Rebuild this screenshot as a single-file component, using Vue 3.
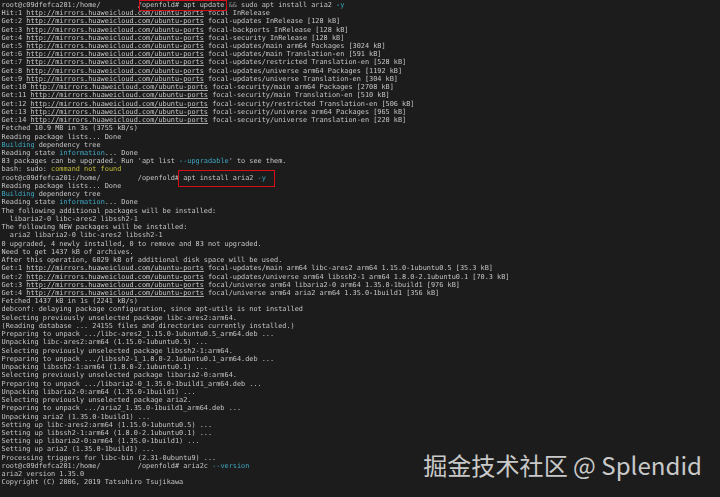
<script setup>
const mirror = 'http://mirrors.huaweicloud.com/ubuntu-ports'
const pad = '         '
const get = (label, rest) => [[label + ' '], [mirror, 'link'], [' ' + rest]]
const prompt = '/openfold#'

const lines = [
  [['root@c09dfefca201:/home/' + pad + prompt + ' apt update '], ['&&', 'dim'], [' sudo apt install aria2 '], ['-y', 'cyan']],
  get('Hit:1', 'focal InRelease'),
  get('Get:2', 'focal-updates InRelease [128 kB]'),
  get('Get:3', 'focal-backports InRelease [128 kB]'),
  get('Get:4', 'focal-security InRelease [128 kB]'),
  get('Get:5', 'focal-updates/main arm64 Packages [3024 kB]'),
  get('Get:6', 'focal-updates/main Translation-en [591 kB]'),
  get('Get:7', 'focal-updates/restricted Translation-en [528 kB]'),
  get('Get:8', 'focal-updates/universe arm64 Packages [1192 kB]'),
  get('Get:9', 'focal-updates/universe Translation-en [304 kB]'),
  get('Get:10', 'focal-security/main arm64 Packages [2708 kB]'),
  get('Get:11', 'focal-security/main Translation-en [510 kB]'),
  get('Get:12', 'focal-security/restricted Translation-en [506 kB]'),
  get('Get:13', 'focal-security/universe arm64 Packages [965 kB]'),
  get('Get:14', 'focal-security/universe Translation-en [220 kB]'),
  [['Fetched 10.9 MB in 3s (3755 kB/s)']],
  [['Reading package lists... Done']],
  [['Building', 'cyan'], [' dependency tree']],
  [['Reading state '], ['information', 'cyan'], ['... Done']],
  [["83 packages can be upgraded. Run 'apt list "], ['--upgradable', 'cyan'], ["' to see them."]],
  [['bash: sudo: '], ['command not found', 'yellow']],
  [['root@c09dfefca201:/home/' + pad + prompt + ' apt install aria2 '], ['-y', 'cyan']],
  [['Reading package lists... Done']],
  [['Building', 'cyan'], [' dependency tree']],
  [['Reading state '], ['information', 'cyan'], ['... Done']],
  [['The following additional packages will be installed:']],
  [['  libaria2-0 libc-ares2 libssh2-1']],
  [['The following NEW packages will be installed:']],
  [['  aria2 libaria2-0 libc-ares2 libssh2-1']],
  [['0 upgraded, 4 newly installed, 0 to remove and 83 not upgraded.']],
  [['Need to get 1437 kB of archives.']],
  [['After this operation, 6029 kB of additional disk space will be used.']],
  get('Get:1', 'focal-updates/main arm64 libc-ares2 arm64 1.15.0-1ubuntu0.5 [35.3 kB]'),
  get('Get:2', 'focal-updates/universe arm64 libssh2-1 arm64 1.8.0-2.1ubuntu0.1 [70.3 kB]'),
  get('Get:3', 'focal/universe arm64 libaria2-0 arm64 1.35.0-1build1 [976 kB]'),
  get('Get:4', 'focal/universe arm64 aria2 arm64 1.35.0-1build1 [356 kB]'),
  [['Fetched 1437 kB in 1s (2241 kB/s)']],
  [['debconf: delaying package configuration, since apt-utils is not installed']],
  [['Selecting previously unselected package libc-ares2:arm64.']],
  [['(Reading database ... 24155 files and directories currently installed.)']],
  [['Preparing to unpack .../libc-ares2_1.15.0-1ubuntu0.5_arm64.deb ...']],
  [['Unpacking libc-ares2:arm64 (1.15.0-1ubuntu0.5) ...']],
  [['Selecting previously unselected package libssh2-1:arm64.']],
  [['Preparing to unpack .../libssh2-1_1.8.0-2.1ubuntu0.1_arm64.deb ...']],
  [['Unpacking libssh2-1:arm64 (1.8.0-2.1ubuntu0.1) ...']],
  [['Selecting previously unselected package libaria2-0:arm64.']],
  [['Preparing to unpack .../libaria2-0_1.35.0-1build1_arm64.deb ...']],
  [['Unpacking libaria2-0:arm64 (1.35.0-1build1) ...']],
  [['Selecting previously unselected package aria2.']],
  [['Preparing to unpack .../aria2_1.35.0-1build1_arm64.deb ...']],
  [['Unpacking aria2 (1.35.0-1build1) ...']],
  [['Setting up libc-ares2:arm64 (1.15.0-1ubuntu0.5) ...']],
  [['Setting up libssh2-1:arm64 (1.8.0-2.1ubuntu0.1) ...']],
  [['Setting up libaria2-0:arm64 (1.35.0-1build1) ...']],
  [['Setting up aria2 (1.35.0-1build1) ...']],
  [['Processing triggers for libc-bin (2.31-0ubuntu9) ...']],
  [['root@c09dfefca201:/home/' + pad + prompt + ' aria2c '], ['--version', 'cyan']],
  [['aria2 version 1.35.0']],
  [['Copyright (C) 2006, 2019 Tatsuhiro Tsujikawa']],
]
</script>

<template>
  <main class="screen">
    <div class="terminal">
      <div v-for="(line, i) in lines" :key="i" class="line">
        <span v-for="(seg, j) in line" :key="j" :class="seg[1]">{{ seg[0] }}</span>
      </div>
    </div>
    <div class="mark first"></div>
    <div class="mark second"></div>
    <div class="watermark">掘金技术社区 @ Splendid</div>
  </main>
</template>

<style>
html, body { margin: 0; background: #1c1c1c; }
</style>

<style scoped>
.screen {
  position: relative;
  width: 720px;
  height: 497px;
  overflow: hidden;
  background: #1c1c1c;
}
.terminal {
  padding: 0.8px 0 0 1.5px;
  color: #c6c6c6;
  font-family: "DejaVu Sans Mono", "Liberation Mono", monospace;
  font-size: 6.86px;
  line-height: 8.24px;
  white-space: pre;
  filter: blur(0.35px);
}
.line { height: 8.24px; }
.link { text-decoration: underline; text-decoration-color: #a8a8a8; text-underline-offset: 1px; }
.cyan { color: #3fa9c4; }
.yellow { color: #c4bf3a; }
.dim { color: #8a8a8a; }
.mark {
  position: absolute;
  box-sizing: border-box;
  border: 1.5px solid #d3101a;
}
.first { left: 139px; top: 0; width: 88px; height: 10.5px; }
.second { left: 178px; top: 170px; width: 97px; height: 17px; }
.watermark {
  position: absolute;
  right: 18px;
  top: 448px;
  color: #c9c9c9;
  font-family: "Noto Sans CJK SC", "Noto Sans", sans-serif;
  font-size: 24.1px;
  line-height: 34px;
  white-space: nowrap;
}
</style>
